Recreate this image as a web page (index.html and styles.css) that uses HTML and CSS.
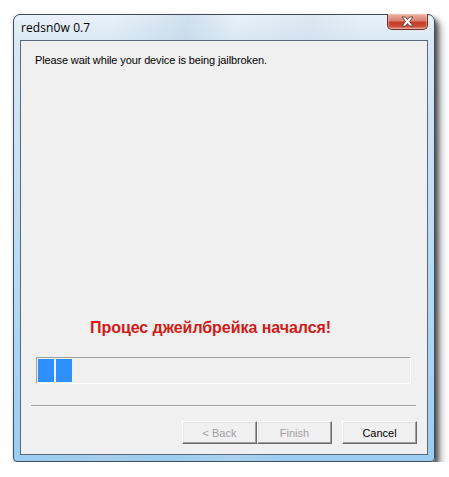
FILE: index.html
```html
<!DOCTYPE html>
<html>
<head>
<meta charset="utf-8">
<link rel="stylesheet" href="styles.css">
</head>
<body>
<div class="window">
  <div class="titlebar">
    <span class="title">redsn0w 0.7</span>
    <div class="close">
      <svg width="17" height="11" viewBox="0 0 17 11">
        <path d="M3 1 L6.5 1 L8.5 3.5 L10.5 1 L14 1 L10.5 5.5 L14 10 L10.5 10 L8.5 7.5 L6.5 10 L3 10 L6.5 5.5 Z" fill="#fff" stroke="#5a2a22" stroke-width="0.8" stroke-linejoin="round"/>
      </svg>
    </div>
  </div>
  <div class="client">
    <p class="msg">Please wait while your device is being jailbroken.</p>
    <p class="status">Процес джейлбрейка начался!</p>
    <div class="progress">
      <span class="block"></span><span class="block"></span>
    </div>
    <div class="separator"></div>
    <div class="buttons">
      <button class="btn disabled">&lt; Back</button>
      <button class="btn disabled">Finish</button>
      <button class="btn cancel">Cancel</button>
    </div>
  </div>
</div>
</body>
</html>
```
FILE: styles.css
```css
html, body {
  margin: 0;
  padding: 0;
  background: #ffffff;
}
body {
  padding: 14px 0 0 13px;
}
.window {
  width: 422px;
  height: 448px;
  box-sizing: border-box;
  border: 1px solid #3e4c5c;
  border-radius: 7px 7px 4px 4px;
  background:
    linear-gradient(100deg, rgba(255,255,255,0) 20%, rgba(180,205,225,0.45) 35%, rgba(255,255,255,0) 45%, rgba(200,215,230,0.35) 60%, rgba(255,255,255,0) 70%),
    linear-gradient(to bottom, #eaf1f8 0px, #d9e8f4 25px, #b5d9f4 60%, #9acdf1 100%);
  box-shadow: 3px 4px 5px rgba(0,0,0,0.6), 6px 7px 9px rgba(0,0,0,0.3);
  padding: 0 6px 6px 6px;
  display: flex;
  flex-direction: column;
}
.titlebar {
  height: 25px;
  display: flex;
  align-items: flex-start;
  justify-content: space-between;
  position: relative;
}
.title {
  font-family: "Open Sans", "Noto Sans", sans-serif;
  font-size: 12px;
  color: #000;
  margin-top: 4px;
  margin-left: 1px;
  letter-spacing: 0.1px;
}
.close {
  width: 41px;
  height: 16px;
  margin-top: -1px;
  box-sizing: border-box;
  border: 1px solid #6a2f27;
  border-top: none;
  border-radius: 0 0 5px 5px;
  background: linear-gradient(to bottom, #eab3a6 0%, #d9806f 45%, #c43e28 55%, #c94a34 80%, #e0907e 100%);
  display: flex;
  align-items: center;
  justify-content: center;
  box-shadow: inset 0 0 0 1px rgba(255,210,200,0.45);
}
.client {
  flex: 1;
  box-sizing: border-box;
  border: 1px solid #5b6a7a;
  background: #f0f0f0;
  display: flex;
  flex-direction: column;
}
.msg {
  margin: 13px 0 0 14px;
  font-family: "Liberation Sans", Arial, sans-serif;
  font-size: 11px;
  letter-spacing: -0.12px;
  color: #000;
}
.status {
  margin: 253px 0 0 69px;
  font-family: "Liberation Sans", Arial, sans-serif;
  font-weight: bold;
  font-size: 16px;
  letter-spacing: -0.05px;
  color: #d21a16;
}
.progress {
  margin: 20px 0 0 15px;
  width: 375px;
  height: 27px;
  box-sizing: border-box;
  border-top: 1px solid #a0a0a0;
  border-left: 1px solid #a0a0a0;
  border-right: 1px solid #ffffff;
  border-bottom: 1px solid #ffffff;
  padding: 1px 0 0 1px;
  display: flex;
  gap: 2px;
}
.block {
  width: 16px;
  height: 23px;
  background: #2e8fff;
}
.separator {
  margin: 21px 0 0 10px;
  width: 385px;
  height: 1px;
  background: #a0a0a0;
  border-bottom: 1px solid #ffffff;
}
.buttons {
  margin: 14px 0 0 161px;
  display: flex;
}
.btn {
  width: 75px;
  height: 23px;
  box-sizing: border-box;
  font-family: "Liberation Sans", Arial, sans-serif;
  font-size: 11px;
  color: #000;
  background: #f0f0f0;
  border-top: 1px solid #ffffff;
  border-left: 1px solid #ffffff;
  border-right: 1px solid #696969;
  border-bottom: 1px solid #696969;
  box-shadow: inset -1px -1px 0 #a0a0a0, inset 1px 1px 0 #e3e3e3;
  padding: 0;
}
.btn.disabled {
  color: #a0a0a0;
}
.btn.cancel {
  margin-left: 10px;
}
```
